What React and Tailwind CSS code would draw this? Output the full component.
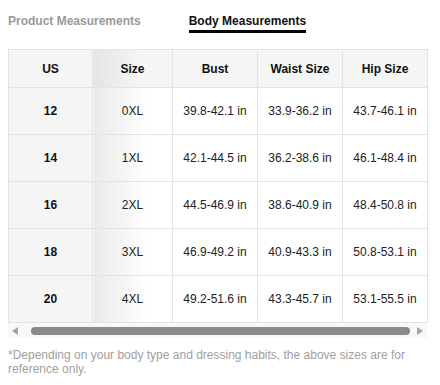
import React from "react";

const rows = [
  ["12", "0XL", "39.8-42.1 in", "33.9-36.2 in", "43.7-46.1 in"],
  ["14", "1XL", "42.1-44.5 in", "36.2-38.6 in", "46.1-48.4 in"],
  ["16", "2XL", "44.5-46.9 in", "38.6-40.9 in", "48.4-50.8 in"],
  ["18", "3XL", "46.9-49.2 in", "40.9-43.3 in", "50.8-53.1 in"],
  ["20", "4XL", "49.2-51.6 in", "43.3-45.7 in", "53.1-55.5 in"],
];

const headers = ["US", "Size", "Bust", "Waist Size", "Hip Size"];

export default function App() {
  return (
    <div
      className="w-[440px] h-[385px] bg-white px-2 text-[12px] text-[#222]"
      style={{ fontFamily: '"Liberation Sans", Arial, sans-serif' }}
    >
      {/* Tabs */}
      <div className="flex flex-row items-start gap-12 pt-[14px] font-bold leading-[14px]">
        <div className="text-[#999] pb-[5px]">Product Measurements</div>
        <div className="text-[#111] pb-[2px] border-b-[3px] border-black">Body Measurements</div>
      </div>

      {/* Table */}
      <div className="mt-[16px] w-[419px]">
        <table className="w-[419px] table-fixed border-collapse border border-[#e3e3e3] text-center">
          <colgroup>
            <col className="w-[84px]" />
            <col className="w-[80px]" />
            <col className="w-[85px]" />
            <col className="w-[85px]" />
            <col className="w-[85px]" />
          </colgroup>
          <thead>
            <tr className="h-[38px] bg-[#f5f5f5]">
              {headers.map((h, i) => (
                <th
                  key={h}
                  className={`border border-[#e3e3e3] font-bold text-[#111] ${
                    i === 1 ? "bg-gradient-to-r from-[#e4e4e4] to-[#f5f5f5] to-60%" : ""
                  }`}
                >
                  {h}
                </th>
              ))}
            </tr>
          </thead>
          <tbody>
            {rows.map((r) => (
              <tr key={r[0]} className="h-[47px]">
                <td className="border border-[#e3e3e3] bg-[#f5f5f5] font-bold text-[#111]">{r[0]}</td>
                <td className="border border-[#e3e3e3] bg-gradient-to-r from-[#eaeaea] to-white to-70%">{r[1]}</td>
                <td className="border border-[#e3e3e3]">{r[2]}</td>
                <td className="border border-[#e3e3e3]">{r[3]}</td>
                <td className="border border-[#e3e3e3]">{r[4]}</td>
              </tr>
            ))}
          </tbody>
        </table>

        {/* Horizontal scrollbar */}
        <div className="h-[15px] bg-[#f8f8f8] flex flex-row items-center px-[4px]">
          <div className="w-0 h-0 border-y-[4px] border-y-transparent border-r-[6px] border-r-[#a3a3a3]" />
          <div className="flex-1 h-[8px] rounded-full bg-[#8a8a8a] ml-[13px] mr-[7px]" />
          <div className="w-0 h-0 border-y-[4px] border-y-transparent border-l-[6px] border-l-[#a3a3a3]" />
        </div>
      </div>

      {/* Footnote */}
      <p className="mt-[10px] text-[#a0a0a0] leading-[14px]">
        *Depending on your body type and dressing habits, the above sizes are for reference only.
      </p>
    </div>
  );
}
